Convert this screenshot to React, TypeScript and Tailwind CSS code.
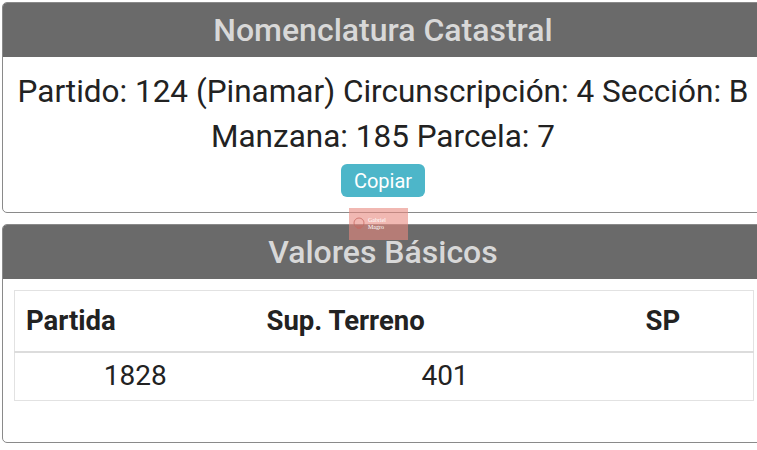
export default function App() {
  return (
    <div className="h-[450px] w-[757px] overflow-hidden bg-white pt-[2px] font-['Roboto',sans-serif]">
      <div className="ml-[2px] w-[762px]">
        <section className="overflow-hidden rounded-[5px] border border-[#8a8a8a] bg-white">
          <h2 className="flex h-[54px] items-center justify-center bg-[#6a6a6a] text-[32px] font-medium text-[#d8d8d8]">
            Nomenclatura Catastral
          </h2>
          <div className="flex flex-col items-center pt-[12px] pb-[15px] text-[31.5px] leading-[45px] text-[#222]">
            <p className="whitespace-nowrap">Partido: 124 (Pinamar) Circunscripción: 4 Sección: B</p>
            <p>Manzana: 185 Parcela: 7</p>
            <button
              type="button"
              className="mt-[5px] flex h-[33px] w-[84px] items-center justify-center rounded-[6px] bg-[#4db6c9] text-[20px] leading-none text-white"
            >
              Copiar
            </button>
          </div>
        </section>

        <section className="mt-[11px] overflow-hidden rounded-[5px] border border-[#8a8a8a] bg-white">
          <h2 className="flex h-[54px] items-center justify-center bg-[#6a6a6a] text-[32px] font-medium text-[#d8d8d8]">
            Valores Básicos
          </h2>
          <div className="pt-[11px] pb-[41px] pl-[11px] pr-[9px]">
            <table className="w-[740px] table-fixed border-collapse border border-[#e2e2e2] text-[#222]">
              <thead>
                <tr className="h-[61px] border-b-2 border-[#dcdcdc]">
                  <th className="w-[241px] pl-[11px] text-left text-[27.5px] font-bold">Partida</th>
                  <th className="w-[379px] pl-[11px] text-left text-[27.5px] font-bold">Sup. Terreno</th>
                  <th className="pl-[11px] text-left text-[27.5px] font-bold">SP</th>
                </tr>
              </thead>
              <tbody>
                <tr className="h-[49px] text-[28px]">
                  <td className="text-center">1828</td>
                  <td className="text-center">401</td>
                  <td></td>
                </tr>
              </tbody>
            </table>
          </div>
        </section>
      </div>

      {/* watermark */}
      <div className="absolute left-[349px] top-[208px] flex h-[32px] w-[59px] items-center gap-[2px] bg-[#e8887f]/60 px-[3px]">
        <svg width="14" height="14" viewBox="0 0 14 14" className="shrink-0">
          <circle cx="7" cy="6" r="5" fill="none" stroke="#c86a62" strokeWidth="0.8" />
          <path d="M4 9h6M5 11h4" stroke="#c86a62" strokeWidth="0.8" />
        </svg>
        <span className="font-['Liberation_Serif',serif] text-[6px] leading-[7px] text-white">
          Gabriel
          <br />
          Magro
        </span>
      </div>
    </div>
  );
}
